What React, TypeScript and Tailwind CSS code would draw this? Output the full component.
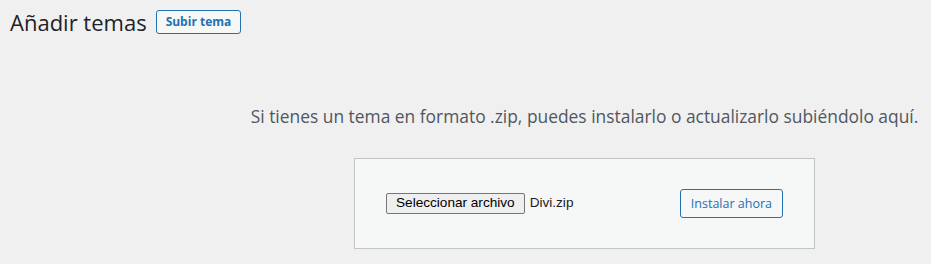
export default function App() {
  return (
    <div className="min-h-screen w-full bg-[#f0f0f1] text-[#3c434a]">
      <div className="flex items-center pl-[10px] pt-[10px]">
        <h1 className="text-[22px] leading-[24px] font-normal text-[#1d2327] font-['Open_Sans','Noto_Sans',sans-serif]">
          Añadir temas
        </h1>
        <button className="ml-[9px] h-[24px] rounded-[3px] border border-[#2271b1] bg-[#f6f7f7] px-[9px] text-[12px] font-bold leading-[22px] text-[#2271b1] font-['Open_Sans','Noto_Sans',sans-serif]">
          Subir tema
        </button>
      </div>
      <div className="pl-[238px]">
        <p className="mt-[70px] text-center text-[17.4px] leading-[24px] text-[#50575e] font-['Open_Sans','Noto_Sans',sans-serif]">
          Si tienes un tema en formato .zip, puedes instalarlo o actualizarlo subiéndolo aquí.
        </p>
        <div className="mx-auto mt-[30px] flex w-[461px] items-center justify-between border border-[#c3c4c7] bg-[#f6f7f7] px-[31px] py-[30px]">
          <div className="flex items-center font-['Liberation_Sans',Arial,sans-serif] text-[13.6px] text-black">
            <span className="flex h-[21px] items-center rounded-[2px] border border-[#767676] bg-[#efefef] px-[9px]">
              Seleccionar archivo
            </span>
            <span className="ml-[5px] text-[#1e1e1e]">Divi.zip</span>
          </div>
          <button className="h-[29px] rounded-[3px] border border-[#2271b1] bg-[#f6f7f7] px-[10px] text-[12.5px] leading-[27px] text-[#2271b1] font-['Open_Sans','Noto_Sans',sans-serif]">
            Instalar ahora
          </button>
        </div>
      </div>
    </div>
  );
}
